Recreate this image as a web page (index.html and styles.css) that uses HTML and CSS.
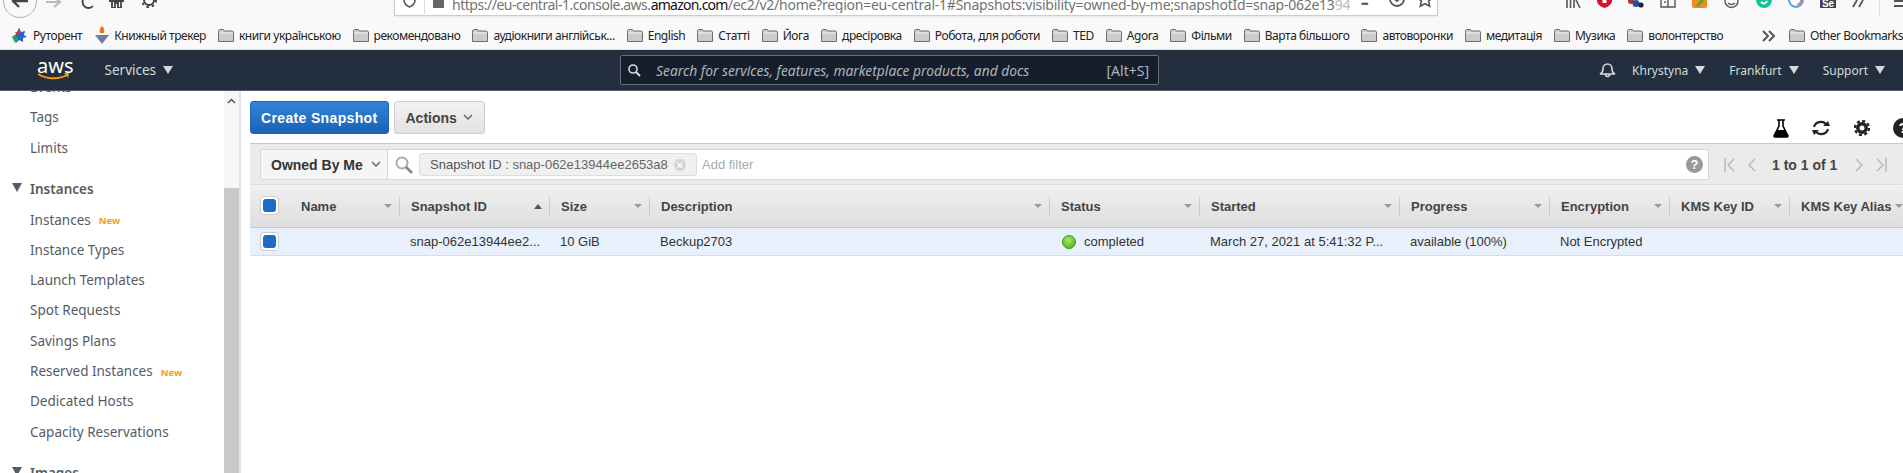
FILE: index.html
```html
<!DOCTYPE html>
<html lang="en">
<head>
	<meta charset="UTF-8">
	<title>Snapshots | EC2 Management Console</title>
	<link rel="stylesheet" href="styles.css">
</head>
<body>
	<!-- browser toolbar, cut off by the top of the picture -->
	<div class="toolbar">
		<div class="back-btn"><svg width="18" height="14" viewBox="0 0 18 14"><path d="M8 1 2 7l6 6M2 7h15" fill="none" stroke="#444" stroke-width="2.4"/></svg></div>
		<svg class="tool fwd" width="16" height="16" viewBox="0 0 16 16"><path d="M8 3l6 5-6 5M14 8H0" fill="none" stroke="#bbb" stroke-width="2.2"/></svg>
		<svg class="tool reload" width="14" height="16" viewBox="0 0 14 16"><path d="M13 12a6 6 0 1 1 0-8" fill="none" stroke="#444" stroke-width="1.8"/></svg>
		<svg class="tool home" width="15" height="16" viewBox="0 0 15 16"><path d="M0 9h15M3 8v8h3v-5h3v5h3V8" fill="none" stroke="#444" stroke-width="1.8"/></svg>
		<svg class="tool gear-top" width="16" height="16" viewBox="0 0 16 16"><circle cx="8" cy="8" r="5" fill="none" stroke="#444" stroke-width="2"/><circle cx="8" cy="8" r="7" fill="none" stroke="#444" stroke-width="2" stroke-dasharray="2.500 3"/></svg>
		<div class="urlbar">
			<svg class="url-shield" width="13" height="16" viewBox="0 0 13 16"><path d="M1 2v6c0 4 3 6 5.500 7C9 14 12 12 12 8V2" fill="none" stroke="#555" stroke-width="1.600"/></svg>
			<span class="url-sep"></span>
			<span class="url-lock"></span>
			<span class="url-text"><span class="url-host">https://eu-central-1.console.aws.</span><b>amazon.com</b>/ec2/v2/home?region=eu-central-1#Snapshots:visibility=owned-by-me;snapshotId=snap-062e13<i>944</i></span>
			<span class="url-dots">•••</span>
			<svg class="url-pocket" width="16" height="16" viewBox="0 0 16 16"><path d="M1 1v6a7 7 0 0 0 14 0V1M4.500 6 8 9l3.500-3" fill="none" stroke="#555" stroke-width="1.800"/></svg>
			<svg class="url-star" width="16" height="16" viewBox="0 0 16 16"><path d="M8 0l2.300 5 5.200.6-3.900 3.500 1.100 5.200L8 11.700l-4.700 2.600 1.100-5.200L.5 5.600 5.700 5z" fill="none" stroke="#555" stroke-width="1.600"/></svg>
		</div>
		<div class="addons">
			<svg width="16" height="8" viewBox="0 0 16 8"><path d="M2 0v8M5.500 0v8M9 0v8M11 0l4 8" stroke="#555" stroke-width="1.600" fill="none"/></svg>
			<svg width="15" height="8" viewBox="0 0 15 8"><path d="M0 -7h15v8c0 3-4 6-7.500 7C4 7 0 4 0 1z" fill="#d8122a"/><rect x="5.500" y="0" width="4" height="3" fill="#fff"/></svg>
			<svg width="16" height="8" viewBox="0 0 16 8"><circle cx="3" cy="1" r="3" fill="#a33"/><circle cx="8" cy="3.500" r="3.500" fill="#2a4f9a"/><circle cx="13" cy="5" r="2.600" fill="#223"/></svg>
			<svg width="16" height="8" viewBox="0 0 16 8"><path d="M1 0v7h14V0M8 0v7M4 2h2" fill="none" stroke="#555" stroke-width="1.400"/></svg>
			<svg width="16" height="8" viewBox="0 0 16 8"><rect y="-7" width="15" height="15" rx="2" fill="#f28a1e"/><path d="M5 6 11 0" stroke="#5a3" stroke-width="3"/></svg>
			<svg width="16" height="8" viewBox="0 0 16 8"><circle cx="7.500" cy="1" r="6.500" fill="none" stroke="#555" stroke-width="1.400"/><path d="M4 3c2 2 5 2 7 0" fill="none" stroke="#555" stroke-width="1.400"/></svg>
			<svg width="16" height="8" viewBox="0 0 16 8"><circle cx="8" cy="0" r="8" fill="#15c39a"/><path d="M5 2c2 2 5 2 6-1" fill="none" stroke="#fff" stroke-width="2"/></svg>
			<svg width="16" height="8" viewBox="0 0 16 8"><circle cx="8" cy="0" r="7" fill="none" stroke="#4aa3df" stroke-width="1.800"/><path d="M12 -3a5 5 0 0 1 -3 8" fill="none" stroke="#d66" stroke-width="1.600"/></svg>
			<span class="addon-se">Se</span>
			<svg width="14" height="8" viewBox="0 0 14 8"><path d="M5 0 1 7M11 0 7 7" fill="none" stroke="#555" stroke-width="1.800"/></svg>
			<span class="addon-sep"></span>
			<span class="burger"></span>
		</div>
	</div>

	<!-- bookmarks -->
	<div class="bookmarks">
		<span class="bm bm-first"><svg width="17" height="17" viewBox="0 0 17 17"><path d="M8 1l2 4 4-1-1 4 3 2-4 1 0 4-4-2-3 3 0-5-4-1 4-3z" fill="#2b62c9"/><path d="M8 1l2 4-4 3-2-3 3 0z" fill="#d23a3a"/><path d="M1 10l4-2 2 4-3 4z" fill="#2aa84a"/></svg>Руторент</span>
		<span class="bm"><svg width="14" height="19" viewBox="0 0 14 19"><path d="M7 0c2 2 3 4 2 7H5C4 4 5 2 7 0z" fill="#e8752a"/><path d="M0 9h14l-7 9z" fill="#6f7f99"/></svg>Книжный трекер</span>
		<span class="bm"><svg class="folder"><use href="#folder"/></svg>книги українською</span>
		<span class="bm"><svg class="folder"><use href="#folder"/></svg>рекомендовано</span>
		<span class="bm"><svg class="folder"><use href="#folder"/></svg>аудіокниги англійськ...</span>
		<span class="bm"><svg class="folder"><use href="#folder"/></svg>English</span>
		<span class="bm"><svg class="folder"><use href="#folder"/></svg>Статті</span>
		<span class="bm"><svg class="folder"><use href="#folder"/></svg>Йога</span>
		<span class="bm"><svg class="folder"><use href="#folder"/></svg>дресіровка</span>
		<span class="bm"><svg class="folder"><use href="#folder"/></svg>Робота, для роботи</span>
		<span class="bm"><svg class="folder"><use href="#folder"/></svg>TED</span>
		<span class="bm"><svg class="folder"><use href="#folder"/></svg>Agora</span>
		<span class="bm"><svg class="folder"><use href="#folder"/></svg>Фільми</span>
		<span class="bm"><svg class="folder"><use href="#folder"/></svg>Варта більшого</span>
		<span class="bm"><svg class="folder"><use href="#folder"/></svg>автоворонки</span>
		<span class="bm"><svg class="folder"><use href="#folder"/></svg>медитація</span>
		<span class="bm"><svg class="folder"><use href="#folder"/></svg>Музика</span>
		<span class="bm"><svg class="folder"><use href="#folder"/></svg>волонтерство</span>
		<svg class="bm-more" width="14" height="12" viewBox="0 0 14 12"><path d="M1 1l5 5-5 5M7 1l5 5-5 5" fill="none" stroke="#555" stroke-width="2"/></svg>
		<span class="bm bm-other"><svg class="folder"><use href="#folder"/></svg>Other Bookmarks</span>
	</div>
	<svg class="defs"><symbol id="folder" viewBox="0 0 16 13"><path d="M.5 12.500V1.500l1-1h4l1 1.500h8l1 1v9.500z" fill="#cbcbcb" stroke="#6e6e6e"/><path d="M1 4h14" stroke="#f2f2f2"/></symbol></svg>

	<!-- aws console header -->
	<div class="nav">
		<div class="logo">
			<span class="logo-text">aws</span>
			<svg width="33" height="8" viewBox="0 0 33 8"><path d="M1 1c8 5 20 6 29 1" fill="none" stroke="#f90" stroke-width="2"/><path d="M27 0l5 0-1 5z" fill="#f90"/></svg>
		</div>
		<div class="nav-item nav-services">Services<i class="tri"></i></div>
		<div class="search">
			<svg width="13" height="13" viewBox="0 0 13 13"><circle cx="5" cy="5" r="4" fill="none" stroke="#d5dbdb" stroke-width="1.600"/><path d="M8 8l4 4" stroke="#d5dbdb" stroke-width="2"/></svg>
			<span class="search-text">Search for services, features, marketplace products, and docs</span>
			<span class="search-key">[Alt+S]</span>
		</div>
		<svg class="bell" width="17" height="16" viewBox="0 0 17 16"><path d="M1 12c2-1 3-2 3-5 0-3 2-5 4.500-5S13 4 13 7c0 3 1 4 3 5zM6.500 12.500a2 2 0 0 0 4 0" fill="none" stroke="#d5dbdb" stroke-width="1.600"/></svg>
		<div class="nav-item">Khrystyna<i class="tri"></i></div>
		<div class="nav-item">Frankfurt<i class="tri"></i></div>
		<div class="nav-item">Support<i class="tri"></i></div>
	</div>

	<div class="page">
		<div class="sidebar">
			<ul class="side-list">
				<li>Events</li>
				<li>Tags</li>
				<li>Limits</li>
				<li class="side-head"><i class="side-tri"></i>Instances</li>
				<li>Instances<span class="new">New</span></li>
				<li>Instance Types</li>
				<li>Launch Templates</li>
				<li>Spot Requests</li>
				<li>Savings Plans</li>
				<li>Reserved Instances<span class="new">New</span></li>
				<li>Dedicated Hosts</li>
				<li>Capacity Reservations</li>
				<li class="side-head"><i class="side-tri"></i>Images</li>
			</ul>
		</div>
		<div class="scrollbar">
			<svg width="9" height="6" viewBox="0 0 9 6"><path d="M1 5l3.500-3.500L8 5" fill="none" stroke="#555" stroke-width="1.500"/></svg>
			<div class="thumb"></div>
		</div>

		<div class="main">
			<div class="actions">
				<button class="btn btn-primary">Create Snapshot</button>
				<button class="btn">Actions<svg width="10" height="7" viewBox="0 0 10 7"><path d="M1 1l4 4 4-4" fill="none" stroke="#666" stroke-width="1.500"/></svg></button>
				<div class="tools">
					<svg class="flask" width="18" height="19" viewBox="0 0 18 19"><path d="M5 1h8M7 1v6L2 17q0 1 1 1h12q1 0 1-1L11 7V1" fill="#fff" stroke="#000" stroke-width="1.600"/><path d="M5 11h8l3 6q0 1-1 1H3q-1 0-1-1z"/></svg>
					<svg width="20" height="18" viewBox="0 0 20 18"><path d="M3 8a7 6.500 0 0 1 12-3M17 10a7 6.500 0 0 1-12 3" fill="none" stroke="#222" stroke-width="2.200"/><path d="M12 7h7l-2-5zM8 11H1l2 5z" fill="#222"/></svg>
					<svg width="16" height="16" viewBox="0 0 16 16"><circle cx="8" cy="8" r="4.200" fill="none" stroke="#222" stroke-width="3.400"/><circle cx="8" cy="8" r="7" fill="none" stroke="#222" stroke-width="2.400" stroke-dasharray="3 2.500"/></svg>
					<span class="help help-dark">?</span>
				</div>
			</div>

			<div class="filterbar">
				<div class="filter">
					<div class="owned">Owned By Me<svg width="10" height="7" viewBox="0 0 10 7"><path d="M1 1l4 4 4-4" fill="none" stroke="#666" stroke-width="1.500"/></svg></div>
					<svg class="lens" width="18" height="18" viewBox="0 0 18 18"><circle cx="7" cy="7" r="5.500" fill="#fff" stroke="#aaa" stroke-width="2"/><path d="M11 11l6 6" stroke="#888" stroke-width="2.600"/></svg>
					<div class="token">Snapshot ID<span class="token-val"> : snap-062e13944ee2653a8</span><span class="token-x">×</span></div>
					<span class="add-filter">Add filter</span>
					<span class="help">?</span>
				</div>
				<div class="pager">
					<svg width="11" height="14" viewBox="0 0 11 14"><path d="M1 0v14M10 1 4 7l6 6" fill="none" stroke="#bbb" stroke-width="1.500"/></svg>
					<svg class="pg-prev" width="8" height="14" viewBox="0 0 8 14"><path d="M7 1 1 7l6 6" fill="none" stroke="#bbb" stroke-width="1.500"/></svg>
					<span class="pg-text">1 to 1 of 1</span>
					<svg class="pg-next" width="8" height="14" viewBox="0 0 8 14"><path d="M1 1l6 6-6 6" fill="none" stroke="#bbb" stroke-width="1.500"/></svg>
					<svg width="11" height="14" viewBox="0 0 11 14"><path d="M10 0v14M1 1l6 6-6 6" fill="none" stroke="#bbb" stroke-width="1.500"/></svg>
				</div>
			</div>

			<table class="grid">
				<colgroup>
					<col class="c40"><col class="c110"><col class="c150"><col class="c100"><col class="c400"><col class="c150"><col class="c200"><col class="c150"><col class="c120"><col class="c120"><col class="c113">
				</colgroup>
				<thead>
					<tr>
						<th class="th-check"><span class="check"><i></i></span></th>
						<th><div class="th-in">Name<i class="sort"></i></div></th>
						<th><div class="th-in">Snapshot ID<i class="sort sort-up"></i></div></th>
						<th><div class="th-in">Size<i class="sort"></i></div></th>
						<th><div class="th-in">Description<i class="sort"></i></div></th>
						<th><div class="th-in">Status<i class="sort"></i></div></th>
						<th><div class="th-in">Started<i class="sort"></i></div></th>
						<th><div class="th-in">Progress<i class="sort"></i></div></th>
						<th><div class="th-in">Encryption<i class="sort"></i></div></th>
						<th><div class="th-in">KMS Key ID<i class="sort"></i></div></th>
						<th><div class="th-in th-last"><span class="th-clip">KMS Key Alias</span><i class="sort"></i></div></th>
					</tr>
				</thead>
				<tbody>
					<tr>
						<td class="td-check"><span class="check"><i></i></span></td>
						<td></td>
						<td>snap-062e13944ee2...</td>
						<td>10 GiB</td>
						<td>Beckup2703</td>
						<td><span class="dot"></span>completed</td>
						<td>March 27, 2021 at 5:41:32 P...</td>
						<td>available (100%)</td>
						<td>Not Encrypted</td>
						<td></td>
						<td></td>
					</tr>
				</tbody>
			</table>
		</div>
	</div>
</body>
</html>
```

FILE: styles.css
```css
* {
	box-sizing: border-box;
	margin: 0;
	padding: 0;
}

html, body {
	height: 473px;
	overflow: hidden;
}

body {
	display: flex;
	flex-direction: column;
	background: #fff;
	font-family: "Liberation Sans", Arial, sans-serif;
}

/* browser chrome */
.toolbar {
	display: flex;
	align-items: flex-end;
	flex: 0 0 16px;
	height: 16px;
	padding-left: 3px;
	background: #f9f9fa;
	position: relative;
	z-index: 2;
}

.back-btn {
	display: flex;
	align-items: center;
	justify-content: center;
	flex: 0 0 34px;
	height: 34px;
	margin-bottom: -2px;
	border: 1px solid #b1b1b3;
	border-radius: 50%;
	background: #f9f9fa;
}

.tool {
	flex: none;
	margin-bottom: 8px;
}

.fwd {
	margin-left: 9px;
	margin-bottom: 6px;
}

.reload {
	margin-left: 18px;
	margin-bottom: 6px;
}

.home {
	margin-left: 15px;
}

.gear-top {
	margin-left: 17px;
}

.urlbar {
	display: flex;
	align-items: flex-end;
	flex: 0 0 1044px;
	height: 16px;
	margin-left: 237px;
	padding: 0 0 1px 8px;
	background: #fff;
	border: 1px solid #ccc;
	border-top: 0;
	box-shadow: 0 1px 2px rgba(0, 0, 0, .08);
	overflow: hidden;
	position: relative;
}

.url-shield {
	flex: none;
	margin-bottom: 6px;
}

.url-sep {
	flex: none;
	width: 1px;
	height: 14px;
	margin-left: 8px;
	background: #ddd;
}

.url-lock {
	flex: none;
	width: 11px;
	height: 8px;
	margin: 0 8px 6px 8px;
	background: #666;
}

.url-text {
	flex: none;
	width: 898px;
	font-family: "Noto Sans", sans-serif;
	font-size: 14px;
	line-height: 16px;
	letter-spacing: -.25px;
	color: #737373;
	white-space: nowrap;
	overflow: hidden;
	margin-bottom: 1px;
}

.url-host {
	letter-spacing: -.48px;
}

.url-text b {
	font-weight: normal;
	letter-spacing: -.75px;
	color: #111;
}

.url-text i {
	font-style: normal;
	color: #bbb;
}

.url-dots {
	flex: none;
	width: 16px;
	margin: 0 0 7px 11px;
	font-size: 9px;
	line-height: 6px;
	letter-spacing: -1px;
	color: #555;
}

.url-pocket {
	flex: none;
	margin: 0 0 6px 12px;
}

.url-star {
	flex: none;
	margin: 0 0 6px 12px;
}

.addons {
	display: flex;
	align-items: flex-start;
	align-self: flex-start;
	gap: 16px;
	flex: none;
	margin-left: 127px;
	height: 16px;
}

.addons svg {
	flex: none;
	overflow: visible;
}

.addon-se {
	flex: none;
	width: 16px;
	height: 8px;
	background: #444;
	color: #fff;
	font-size: 10px;
	font-weight: bold;
	line-height: 8px;
	text-align: center;
	overflow: hidden;
}

.addon-sep {
	flex: none;
	width: 1px;
	height: 16px;
	margin-left: -3px;
	background: #ddd;
}

.burger {
	flex: none;
	width: 14px;
	height: 7px;
	margin-left: -2px;
	border-top: 2px solid #555;
	border-bottom: 2px solid #555;
}

.bookmarks {
	display: flex;
	align-items: center;
	flex: 0 0 34px;
	padding: 6px 0 0 11px;
	background: #f9f9fa;
	border-bottom: 1px solid #e1e1e3;
	font-family: "Noto Sans", sans-serif;
	font-size: 12px;
	letter-spacing: -.45px;
	color: #222;
	white-space: nowrap;
	overflow: hidden;
}

.bm {
	display: flex;
	align-items: center;
	flex: none;
	gap: 5px;
	margin-right: 12px;
}

.bm-first {
	margin-right: 13px;
}

.folder {
	width: 16px;
	height: 13px;
}

.bm-more {
	flex: none;
	margin-left: auto;
	margin-right: 13px;
}

.bm-other {
	flex: 0 0 107px;
	margin-right: 0;
}

.defs {
	display: none;
}

/* console header */
.nav {
	display: flex;
	align-items: center;
	flex: 0 0 41px;
	padding-left: 37px;
	background: #232f3e;
	border-bottom: 1px solid #545b64;
	font-family: "Noto Sans", sans-serif;
	font-size: 12px;
	color: #d5dbdb;
}

.logo {
	display: flex;
	flex-direction: column;
	flex: 0 0 33px;
	color: #fff;
	margin-top: -1px;
}

.logo-text {
	font-size: 20px;
	line-height: 16px;
	height: 15px;
	text-align: center;
}

.logo svg {
	display: block;
}

.nav-item {
	display: flex;
	align-items: center;
	flex: none;
	gap: 7px;
	margin-right: 24px;
	white-space: nowrap;
}

.nav-services {
	margin-left: 31px;
	margin-right: 0;
	font-size: 13.5px;
}

.tri {
	width: 0;
	height: 0;
	border-left: 5px solid transparent;
	border-right: 5px solid transparent;
	border-top: 8px solid #d5dbdb;
}

.search {
	display: flex;
	align-items: center;
	flex: 0 0 539px;
	height: 30px;
	margin-left: 447px;
	padding: 0 9px 0 7px;
	background: #161e2d;
	border: 1px solid #687078;
	border-radius: 2px;
}

.search-text {
	margin-left: 15px;
	font-size: 13.8px;
	font-style: italic;
	color: #aab7b8;
	white-space: nowrap;
}

.search-key {
	margin-left: auto;
	font-size: 14px;
	color: #aab7b8;
}

.bell {
	flex: none;
	margin: 0 16px 0 440px;
}

/* left menu */
.page {
	display: flex;
	flex: 1;
	min-height: 0;
}

.sidebar {
	flex: 0 0 224px;
	overflow: hidden;
	background: #fff;
	font-family: "Noto Sans", sans-serif;
	font-size: 13.5px;
	color: #545b64;
}

.side-list {
	list-style: none;
	margin-top: -19px;
	padding-left: 30px;
}

.side-list li {
	display: flex;
	align-items: center;
	height: 30.3px;
	white-space: nowrap;
}

.side-list .side-head {
	position: relative;
	height: 31.5px;
	margin-top: 10px;
	font-weight: 600;
	color: #545b64;
}

.side-tri {
	position: absolute;
	left: -18px;
	top: 10px;
	border-left: 5px solid transparent;
	border-right: 5px solid transparent;
	border-top: 9px solid #545b64;
}

.new {
	margin-left: 8px;
	padding-top: 2px;
	font-size: 9.5px;
	font-weight: 700;
	color: #f29d1f;
}

.scrollbar {
	display: flex;
	flex-direction: column;
	align-items: center;
	flex: 0 0 17px;
	padding-top: 7px;
	background: #f6f6f6;
	border-right: 2px solid #e4e4e4;
}

.scrollbar svg {
	flex: none;
}

.thumb {
	align-self: stretch;
	flex: 1;
	margin-top: 84px;
	background: #c9c9c9;
}

/* main content */
.main {
	flex: 1;
	min-width: 0;
	padding-left: 9px;
	overflow: hidden;
}

.actions {
	display: flex;
	align-items: flex-start;
	gap: 5px;
	height: 52px;
	padding-top: 10px;
}

.btn {
	display: flex;
	align-items: center;
	gap: 6px;
	height: 33px;
	padding: 0 11px;
	font-family: "Liberation Sans", Arial, sans-serif;
	font-size: 14px;
	font-weight: bold;
	color: #444;
	background: linear-gradient(#f2f2f2, #e2e2e2);
	border: 1px solid #ccc;
	border-radius: 3px;
}

.btn-primary {
	padding: 0 10px;
	letter-spacing: .35px;
	color: #fff;
	background: linear-gradient(#2f84d8, #1a62b4);
	border-color: #1f66b0;
}

.tools {
	display: flex;
	align-items: center;
	gap: 23px;
	flex: none;
	margin: 17px -10px 0 auto;
}

.flask {
	margin-right: -2px;
}

.help {
	display: block;
	flex: none;
	width: 17px;
	height: 17px;
	border-radius: 50%;
	background: #999;
	color: #fff;
	font-size: 13px;
	font-weight: bold;
	line-height: 17px;
	text-align: center;
}

.help-dark {
	width: 20px;
	height: 20px;
	line-height: 20px;
	font-size: 15px;
	background: #222;
}

.filterbar {
	display: flex;
	height: 42px;
	padding: 5px 0 0 10px;
	background: #ebebeb;
	border-top: 1px solid #c8c8c8;
	border-bottom: 1px solid #ddd;
}

.filter {
	display: flex;
	align-items: center;
	flex: 0 0 1449px;
	height: 31px;
	background: #fff;
	border: 1px solid #d6d6d6;
	border-radius: 2px;
}

.owned {
	display: flex;
	align-items: center;
	gap: 8px;
	flex: 0 0 127px;
	height: 100%;
	padding-left: 10px;
	font-size: 14px;
	font-weight: bold;
	color: #333;
	background: #f5f5f5;
	border-right: 1px solid #d6d6d6;
}

.lens {
	flex: none;
	margin-left: 7px;
}

.token {
	flex: 0 0 278px;
	height: 23px;
	margin-left: 6px;
	padding-left: 10px;
	font-size: 13px;
	line-height: 22px;
	color: #555;
	background: #f0f0f0;
	border: 1px solid #ddd;
	border-radius: 3px;
	white-space: nowrap;
}

.token-val {
	color: #666;
}

.token-x {
	display: inline-block;
	width: 12px;
	height: 12px;
	margin-left: 6px;
	border-radius: 50%;
	background: #d4d4d4;
	color: #fff;
	font-size: 11px;
	font-weight: bold;
	line-height: 12px;
	text-align: center;
}

.add-filter {
	margin-left: 5px;
	font-size: 13px;
	color: #aaa;
}

.filter .help {
	margin-left: auto;
	margin-right: 5px;
}

.pager {
	display: flex;
	align-items: center;
	flex: none;
	height: 31px;
	padding-left: 15px;
}

.pg-prev {
	margin-left: 13px;
}

.pg-text {
	margin: 0 18px 0 16px;
	font-size: 14px;
	font-weight: bold;
	color: #444;
	white-space: nowrap;
}

.pg-next {
	margin-right: 13px;
}

.grid {
	width: 1653px;
	table-layout: fixed;
	border-collapse: collapse;
	font-size: 13px;
}

.c40 { width: 40px; }
.c100 { width: 100px; }
.c110 { width: 110px; }
.c113 { width: 113px; }
.c120 { width: 120px; }
.c150 { width: 150px; }
.c200 { width: 200px; }
.c400 { width: 400px; }

.grid th {
	height: 42px;
	padding: 0;
	text-align: left;
	font-weight: bold;
	color: #444;
	background: linear-gradient(#f0f0f0, #dedede);
	border-bottom: 1px solid #c6c6c6;
}

.th-in {
	display: flex;
	align-items: center;
	justify-content: space-between;
	height: 19px;
	margin-top: 1px;
	padding: 0 7px 0 11px;
	border-right: 1px solid #ccc;
	white-space: nowrap;
}

.th-last {
	padding-right: 0;
	border-right: 0;
}

.th-clip {
	min-width: 0;
	overflow: hidden;
}

.th-check {
	vertical-align: middle;
}

.sort {
	flex: none;
	border-left: 4px solid transparent;
	border-right: 4px solid transparent;
	border-top: 4px solid #999;
}

.sort-up {
	border-top: 0;
	border-bottom: 5px solid #555;
}

.check {
	display: flex;
	align-items: center;
	justify-content: center;
	width: 19px;
	height: 19px;
	margin-left: 10px;
	background: #fff;
	border: 1px solid #ccc;
	border-radius: 4px;
}

.check i {
	width: 13px;
	height: 13px;
	background: #1a6cc4;
	border-radius: 3px;
}

.grid td {
	height: 28px;
	padding: 0 0 0 10px;
	color: #333;
	background: #e8f1fb;
	border-bottom: 1px solid #dcdcdc;
	white-space: nowrap;
	overflow: hidden;
}

.grid .td-check {
	padding: 0;
}

.dot {
	display: inline-block;
	width: 14px;
	height: 14px;
	margin: 0 8px 0 2px;
	vertical-align: -3px;
	border-radius: 50%;
	background: radial-gradient(circle at 45% 35%, #a4ea5e, #3aa81c);
	border: 1px solid #3a9a20;
}
```
